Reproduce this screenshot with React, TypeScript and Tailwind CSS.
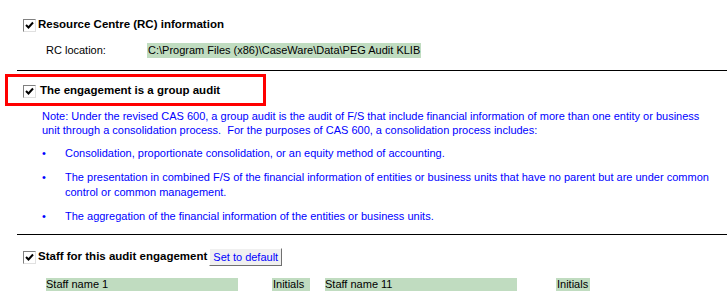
import React from "react";

function CheckBox() {
	return (
		<span className="inline-flex w-[13px] h-[13px] shrink-0 items-center justify-center border border-t-[#808080] border-l-[#808080] border-b-[#e0e0e0] border-r-[#e0e0e0] bg-white">
			<svg width="9" height="9" viewBox="0 0 9 9">
				<path d="M1 4 L3.5 6.5 L8 1.5" fill="none" stroke="#000" strokeWidth="2" />
			</svg>
		</span>
	);
}

const bullets = [
	["Consolidation, proportionate consolidation, or an equity method of accounting."],
	[
		"The presentation in combined F/S of the financial information of entities or business units that have no parent but are under common",
		"control or common management.",
	],
	["The aggregation of the financial information of the entities or business units."],
];

export default function App() {
	return (
		<div className="w-[727px] h-[298px] overflow-hidden bg-white text-black font-['Liberation_Sans',Arial,sans-serif]">
			<div className="h-[17px]" />
			<div className="flex items-center h-[16px] pl-[23px] gap-[2px]">
				<CheckBox />
				<span className="text-[11.5px] font-bold">Resource Centre (RC) information</span>
			</div>
			<div className="flex items-center h-[15px] mt-[10px] text-[11px]">
				<span className="pl-[46px] w-[147px] shrink-0">RC location:</span>
				<span className="bg-[#c0dcc0] h-[15px] flex items-center px-[1px] whitespace-nowrap">
					C:\Program Files (x86)\CaseWare\Data\PEG Audit KLIB
				</span>
			</div>
			<div className="ml-[17px] mt-[12px] border-t border-black" />

			<div className="ml-[5px] mt-[3px] w-[261px] h-[32px] border-[3px] border-[#ff0000] flex items-center pl-[15px] pt-[2px] gap-[4px]">
				<CheckBox />
				<span className="text-[11.5px] font-bold">The engagement is a group audit</span>
			</div>

			<div className="ml-[42px] mt-[3px] text-[11px] leading-[14px] text-[#0000ff] whitespace-pre">
				<div>
					Note: Under the revised CAS 600, a group audit is the audit of F/S that include financial information of more than one entity or business
				</div>
				<div>unit through a consolidation process.  For the purposes of CAS 600, a consolidation process includes:</div>
			</div>

			<div className="mt-[9px] flex flex-col gap-[9px] text-[11px] leading-[15px] text-[#0000ff]">
				{bullets.map((lines, i) => (
					<div key={i} className="flex">
						<span className="pl-[42px] w-[65px]">•</span>
						<div className="whitespace-pre">
							{lines.map((l, j) => (
								<div key={j}>{l}</div>
							))}
						</div>
					</div>
				))}
			</div>

			<div className="ml-[17px] mt-[10px] border-t border-black" />

			<div className="flex items-center h-[18px] mt-[13px] pl-[23px] gap-[2px]">
				<CheckBox />
				<span className="text-[11.5px] font-bold">Staff for this audit engagement</span>
				<button
					type="button"
					className="h-[18px] px-[3px] bg-[#f0f0f0] border border-t-white border-l-white border-b-[#707070] border-r-[#707070] text-[11px] text-[#0000ff] leading-none"
				>
					Set to default
				</button>
			</div>

			<div className="flex items-center h-[13px] mt-[12px] text-[11px] leading-none">
				<span className="ml-[46px] w-[192px] h-[13px] bg-[#c0dcc0] flex items-center">Staff name 1</span>
				<span className="ml-[34px] w-[38px] h-[13px] bg-[#c0dcc0] flex items-center pl-[1px]">Initials</span>
				<span className="ml-[15px] w-[192px] h-[13px] bg-[#c0dcc0] flex items-center">Staff name 11</span>
				<span className="ml-[39px] w-[34px] h-[13px] bg-[#c0dcc0] flex items-center pl-[1px]">Initials</span>
			</div>
		</div>
	);
}
